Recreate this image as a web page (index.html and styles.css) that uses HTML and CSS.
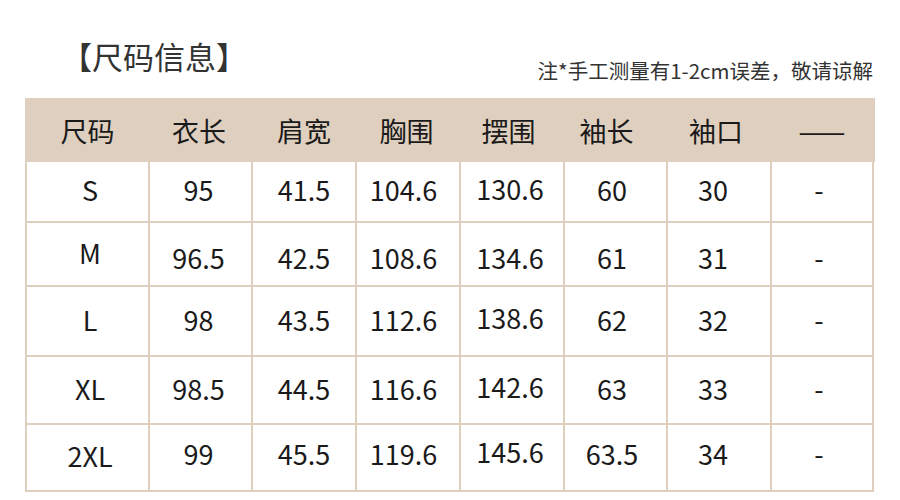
FILE: index.html
```html
<!DOCTYPE html>
<html lang="zh-CN">
<head>
<meta charset="utf-8">
<title>尺码信息</title>
<link rel="stylesheet" href="styles.css">
</head>
<body>
<div class="page">
  <div class="top">
    <h1 class="title">【尺码信息】</h1>
    <p class="note">注*手工测量有1-2cm误差，敬请谅解</p>
  </div>
  <div class="head">
    <div>尺码</div><div>衣长</div><div>肩宽</div><div>胸围</div><div>摆围</div><div>袖长</div><div>袖口</div><div class="dash">——</div>
  </div>
  <div class="body">
    <div class="c">S</div><div class="c">95</div><div class="c">41.5</div><div class="c">104.6</div><div class="c">130.6</div><div class="c">60</div><div class="c">30</div><div class="c">-</div>
    <div class="c">M</div><div class="c">96.5</div><div class="c">42.5</div><div class="c">108.6</div><div class="c">134.6</div><div class="c">61</div><div class="c">31</div><div class="c">-</div>
    <div class="c">L</div><div class="c">98</div><div class="c">43.5</div><div class="c">112.6</div><div class="c">138.6</div><div class="c">62</div><div class="c">32</div><div class="c">-</div>
    <div class="c">XL</div><div class="c">98.5</div><div class="c">44.5</div><div class="c">116.6</div><div class="c">142.6</div><div class="c">63</div><div class="c">33</div><div class="c">-</div>
    <div class="c">2XL</div><div class="c">99</div><div class="c">45.5</div><div class="c">119.6</div><div class="c">145.6</div><div class="c">63.5</div><div class="c">34</div><div class="c">-</div>
  </div>
</div>
</body>
</html>
```
FILE: styles.css
```css
html, body {
  margin: 0;
  padding: 0;
  background: #ffffff;
}
body {
  font-family: "Noto Sans CJK SC", "Noto Sans", sans-serif;
  color: #1a1a1a;
}
.page {
  width: 900px;
  height: 500px;
  padding-left: 25px;
  box-sizing: border-box;
}
.top {
  display: flex;
  justify-content: space-between;
  align-items: flex-end;
  width: 850px;
  height: 98px;
  box-sizing: border-box;
  padding-bottom: 16px;
}
.title {
  margin: 0 0 0 36px;
  font-size: 31px;
  font-weight: 400;
  line-height: 40px;
  color: #333333;
  align-self: flex-start;
  padding-top: 36px;
}
.note {
  margin: 0 2px 0 0;
  font-size: 20.5px;
  line-height: 24px;
  color: #333333;
}

/* header band */
.head {
  display: grid;
  grid-template-columns: 125px 103px 104px 104px 104px 103px 104px 103px;
  width: 850px;
  height: 64px;
  background: #dfcfbf;
  font-size: 27px;
  align-items: center;
  justify-items: center;
}
.head > div:nth-child(2) { padding-right: 5px; }
.head > div:nth-child(3) { padding-right: 2px; }
.head > div:nth-child(4) { padding-right: 5px; }
.head > div:nth-child(5) { padding-right: 9px; }
.head > div:nth-child(6) { padding-right: 20px; }
.head > div:nth-child(7) { padding-right: 8px; }
.head .dash {
  font-size: 28px;
  padding-right: 3px;
}

/* body grid */
.body {
  display: grid;
  grid-template-columns: 125px 103px 104px 104px 104px 103px 104px 102px;
  grid-template-rows: 61px 64px 70px 68px 67px;
  width: 849px;
  font-size: 27px;
}
.c {
  display: flex;
  align-items: center;
  justify-content: center;
  border-right: 2px solid #dfcfbf;
  border-bottom: 2px solid #dfcfbf;
  box-sizing: border-box;
  padding-bottom: 4px;
  padding-right: 4px;
}
/* first column */
.c:nth-child(8n+1) {
  border-left: 2px solid #dfcfbf;
  padding-right: 0;
  padding-left: 5px;
}
.c:nth-child(8n+3) { padding-right: 0; }
.c:nth-child(8n+4) { padding-right: 9px; }
.c:nth-child(8n+6) { padding-right: 7px; }
.c:nth-child(8n+7) { padding-right: 12px; }
.c:nth-child(8n+8) { padding-right: 6px; }

/* 摆围 column sits slightly higher */
.c:nth-child(8n+5) { padding-bottom: 7px; }

/* row M values sit lower */
.c:nth-child(n+10):nth-child(-n+16) {
  padding-top: 6px;
  padding-bottom: 0;
}
.c:nth-child(13) { padding-top: 2px; }

/* last row values sit slightly higher */
.c:nth-child(n+34) { padding-bottom: 8px; }
.c:nth-child(37) { padding-bottom: 12px; }
```
